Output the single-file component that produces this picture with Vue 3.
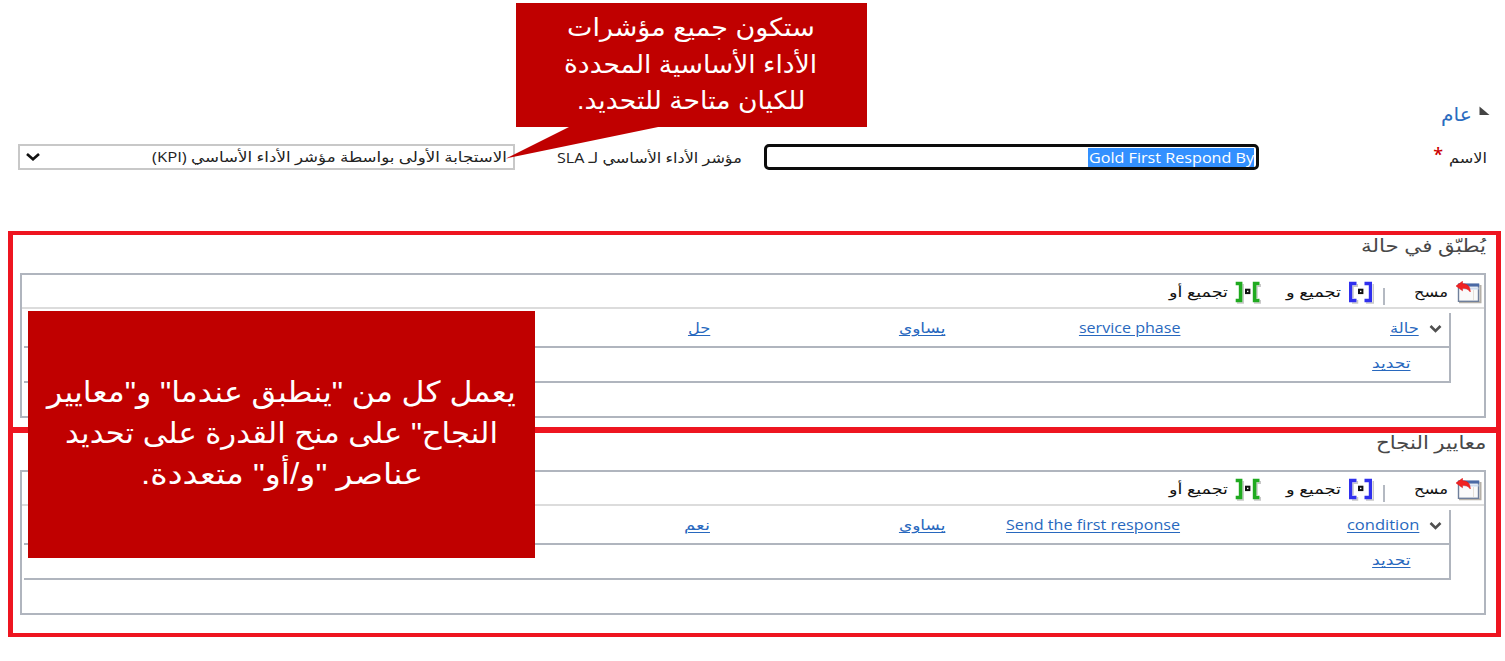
<script setup>
const sections = [
  {
    title: 'يُطبّق في حالة', titleWidth: 125,
    cells: [
      { text: 'حالة', width: 29 },
      { text: 'service phase', width: 101 },
      { text: 'يساوى', width: 46 },
      { text: 'حل', width: 22 },
    ],
  },
  {
    title: 'معايير النجاح', titleWidth: 111,
    cells: [
      { text: 'condition', width: 72 },
      { text: 'Send the first response', width: 174 },
      { text: 'يساوى', width: 46 },
      { text: 'نعم', width: 26 },
    ],
  },
]

const topNote = [
  { text: 'ستكون جميع مؤشرات', width: 248 },
  { text: 'الأداء الأساسية المحددة', width: 253 },
  { text: 'للكيان متاحة للتحديد.', width: 228 },
]
const sideNote = [
  { text: 'يعمل كل من "ينطبق عندما" و"معايير', width: 469 },
  { text: 'النجاح" على منح القدرة على تحديد', width: 433 },
  { text: 'عناصر "و/أو" متعددة.', width: 282 },
]

// Scales a label horizontally so that it fills its assigned width.
const vFit = {
  mounted(el, { value }) {
    const natural = el.offsetWidth
    el.style.transform = `scaleX(${value / natural})`
    el.style.marginLeft = `${value - natural}px`
  },
}
</script>

<template>
  <main class="page" dir="rtl">
    <header class="general">
      <svg class="tri" width="11" height="10" viewBox="0 0 11 10"><path d="M0.5 0.5V9H10.5Z" fill="#444" /></svg>
      <h2><span v-fit="31" class="fit">عام</span></h2>
    </header>

    <div class="fields">
      <label class="name-label"><span v-fit="38" class="fit">الاسم</span><b>*</b></label>
      <div class="name-input"><span class="selection"><span v-fit="165" class="fit">Gold First Respond By</span></span></div>
      <label class="kpi-label"><span v-fit="185" class="fit">مؤشر الأداء الأساسي لـ SLA</span></label>
      <div class="select">
        <span v-fit="355" class="fit">الاستجابة الأولى بواسطة مؤشر الأداء الأساسي (KPI)</span>
        <svg width="16" height="10" viewBox="0 0 16 10"><path d="M2 2L8 7.3L14 2" fill="none" stroke="#111" stroke-width="2.6" /></svg>
      </div>
    </div>

    <section v-for="(s, i) in sections" :key="i" class="frame">
      <h3><span v-fit="s.titleWidth" class="fit">{{ s.title }}</span></h3>
      <div class="builder">
        <div class="toolbar">
          <svg class="clear" width="26" height="24" viewBox="0 0 26 24">
            <path d="M3 21.3H24.5V4" fill="none" stroke="#b5b0a8" stroke-width="2" />
            <rect x="2.5" y="3.5" width="20" height="16.8" fill="#fafafa" stroke="#6f7f9b" stroke-width="1.4" />
            <path d="M2 2.5H23.2V5.6H2Z" fill="#4a69a5" />
            <path d="M3 6.5H22.5V8.5H3Z" fill="#cfdcf0" />
            <path d="M17.5 9V19" stroke="#e5e0d8" />
            <path d="M0 5L6.5 .3V2.8C11 2.8 14.3 5 14.3 11C12 8 10 7.3 6.5 7.3V9.8Z" fill="#f12222" stroke="#d11" stroke-width=".5" />
          </svg>
          <span class="clear-text"><span v-fit="34" class="fit">مسح</span></span>
          <i class="sep"></i>
          <svg class="and" width="26" height="23" viewBox="0 0 26 23">
            <path d="M4 22H9.5V19M18 22H25.3V3M9.3 3V5.2H5V17" fill="none" stroke="#c8c8c8" stroke-width="1.5" />
            <path d="M1 .8H8.5V4.2H4.2V17.8H8.5V21.2H1ZM16.5 .8H24V21.2H16.5V17.8H20.8V4.2H16.5Z" fill="#3030ee" />
            <rect x="11" y="8.7" width="3.4" height="3.4" fill="#fff" stroke="#111" stroke-width="2" />
          </svg>
          <span class="and-text"><span v-fit="55" class="fit">تجميع و</span></span>
          <svg class="or" width="26" height="23" viewBox="0 0 26 23">
            <path d="M2 22H8.2V3M19 22H25.5V19M25.3 3V5.2H22V17" fill="none" stroke="#c8c8c8" stroke-width="1.5" />
            <path d="M.7 .8H7.4V21.2H.7V17.8H3.8V4.2H.7ZM17.8 .8H24.5V4.2H21.4V17.8H24.5V21.2H17.8Z" fill="#20aa20" />
            <rect x="11" y="8.7" width="3.4" height="3.4" fill="#fff" stroke="#111" stroke-width="2" />
          </svg>
          <span class="or-text"><span v-fit="59" class="fit">تجميع أو</span></span>
        </div>
        <div class="rows">
          <div class="row">
            <svg class="chev" width="13" height="10" viewBox="0 0 13 10"><path d="M1.5 2L6.5 7L11.5 2" fill="none" stroke="#505050" stroke-width="2.6" /></svg>
            <span v-for="(c, j) in s.cells" :key="j" class="cell"><a v-fit="c.width" class="fit">{{ c.text }}</a></span>
          </div>
          <div class="row pick"><a v-fit="39" class="fit">تحديد</a></div>
        </div>
      </div>
    </section>

    <svg class="tail" width="160" height="34" viewBox="0 0 160 34"><path d="M65 0H157L0 32.5Z" fill="#c00000" /></svg>
    <aside class="note top-note">
      <p v-for="l in topNote" :key="l.text"><span v-fit="l.width" class="fit">{{ l.text }}</span></p>
    </aside>
    <aside class="note side-note">
      <p v-for="l in sideNote" :key="l.text"><span v-fit="l.width" class="fit">{{ l.text }}</span></p>
    </aside>
  </main>
</template>

<style>
body { margin: 0; background: #fff; }
</style>

<style scoped>
* { box-sizing: border-box; }
.page {
  position: relative; width: 1505px; height: 661px; overflow: hidden; background: #fff;
  font-family: "Open Sans", "DejaVu Sans", sans-serif; font-size: 14px; color: #222;
}
.fit { display: inline-block; white-space: nowrap; transform-origin: right center; flex: none; }
h2, h3, p { margin: 0; font-weight: 400; }
.general { display: flex; height: 144px; padding: 101px 15px 0 0; }
.tri { margin-top: 5px; }
.general h2 { margin-right: 7px; font-size: 19px; line-height: 26px; color: #2b6cc0; }
.fields { display: flex; height: 87px; padding-right: 18px; line-height: 27px; font-size: 14px; }
.name-label { display: flex; width: 228px; }
.name-label b { margin-right: 6px; font: 600 18px/21px "Open Sans", sans-serif; color: #c00; }
.name-input {
  width: 495px; height: 26px; padding: 1px 2px 0; border: 3px solid #0c0c0c; border-radius: 5px; line-height: 20px;
}
.selection { display: block; width: 166px; height: 19px; background: #3390ff; color: #fff; }
.kpi-label { width: 249px; padding-right: 22px; }
.select {
  display: flex; justify-content: space-between; align-items: center;
  width: 497px; height: 26px; padding: 0 6px 0 5px; border: 2px solid #c8c8c8; line-height: 24px;
}
.frame { width: 1493px; height: 199px; margin-right: 4px; padding: 0 10px 0 7px; border: solid #ee1520; border-width: 4px 5px 3px; }
.frame + .frame { height: 207px; border-width: 3px 5px 4px; }
.frame h3 { height: 38px; font-size: 18px; line-height: 20px; color: #484848; }
.frame + .frame h3 { height: 37px; line-height: 18px; }
.builder { width: 1466px; height: 145px; border: 2px solid #b0b5be; }
.toolbar { display: flex; height: 34px; border-bottom: 2px solid #dcdcdc; line-height: 34px; color: #111; }
.toolbar svg { margin-top: 6px; flex: none; }
.clear { margin-right: 2px; }
.clear-text { width: 71px; padding-right: 8px; }
.sep { width: 2px; height: 17px; margin-top: 13px; background: #b4b9c2; }
.and { margin-right: 9px; }
.and-text { width: 87px; padding-right: 7px; }
.or-text { padding-right: 7px; }
.rows { width: 1427px; height: 70px; margin: 4px 33px 0 0; border-right: 2px solid #b0b5be; }
.row { display: flex; height: 35px; border-bottom: 2px solid #b0b5be; line-height: 29px; }
.chev { margin: 11px 7px 0 10px; }
.cell { width: 235px; }
.cell:nth-of-type(1) { width: 239px; }
a { color: #2868be; text-decoration: underline; text-decoration-thickness: 1px; text-underline-offset: 2px; }
.pick { padding-right: 38px; line-height: 30px; }
.note { position: absolute; background: #c00000; color: #fff; text-align: center; font-family: "Liberation Sans", "DejaVu Sans", sans-serif; }
.note p { display: flex; justify-content: center; }
.top-note { left: 516px; top: 3px; width: 351px; height: 124px; padding: 6px 1px 0 0; font-size: 25px; line-height: 36.5px; }
.side-note { left: 28px; top: 311px; width: 507px; height: 247px; padding: 61px 0 0 0; font-size: 29px; line-height: 41px; }
.tail { position: absolute; left: 506px; top: 126px; }
</style>
